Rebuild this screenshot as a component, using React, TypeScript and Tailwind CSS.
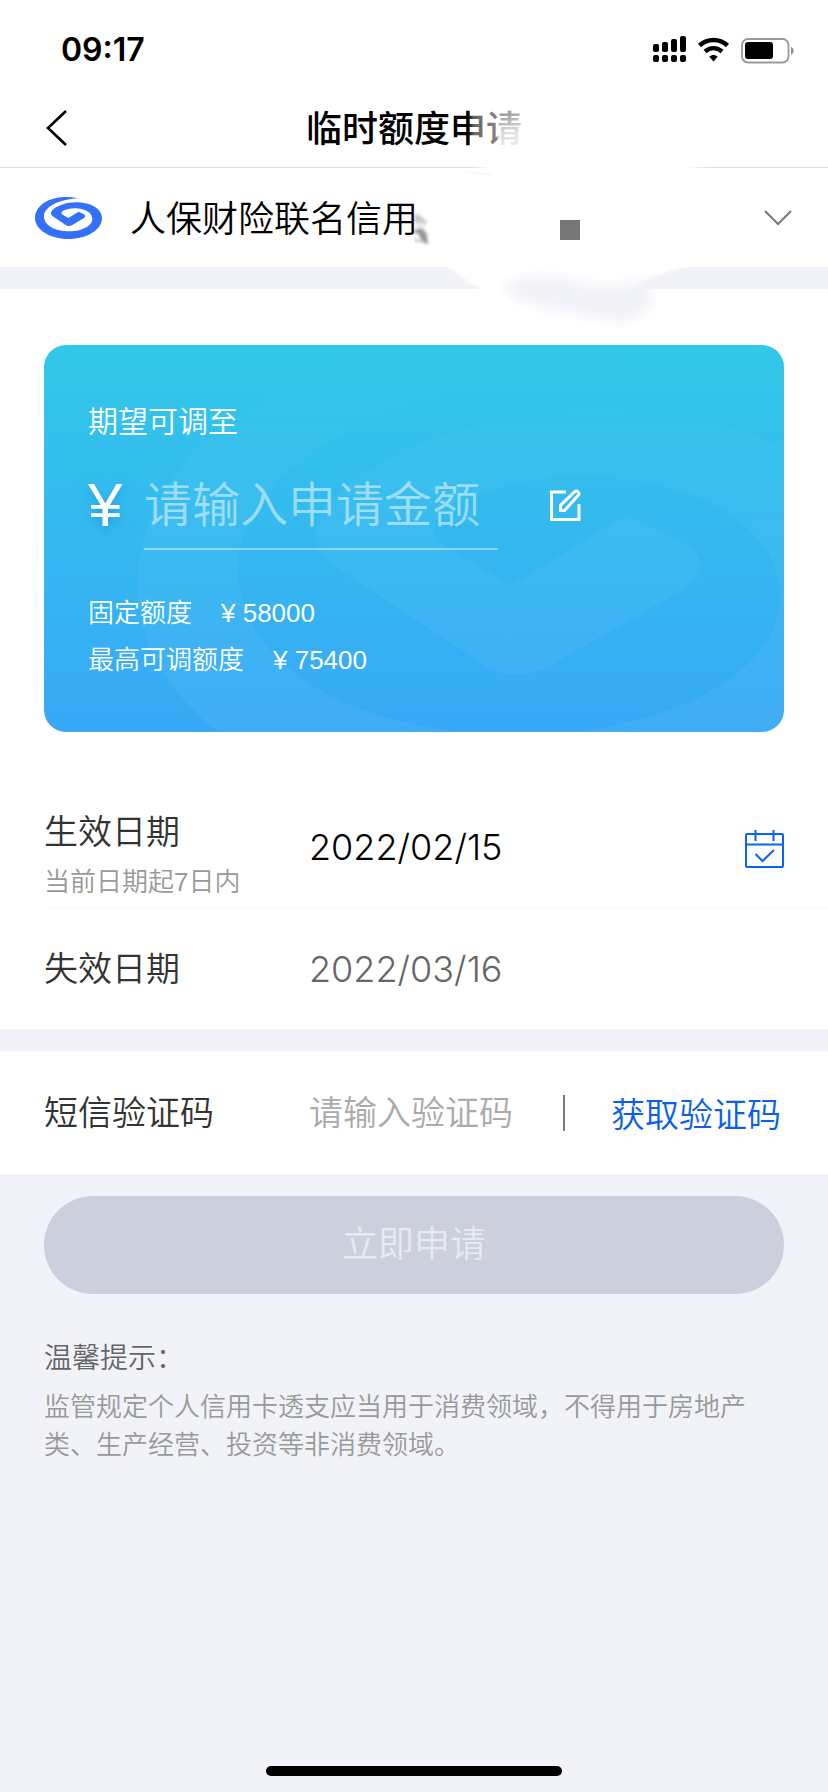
import { useState } from "react";

const SWIRL =
    "M131 4 C117 1 100 0 87 0 C38 2 0 28 0 63 C0 98 45 126 100 126 C156 126 201 98 201 63 C201 36 168 16 122 16 C95 16 66 26 52 40 C46 46 46 53 53 58 L91 83 C97 88 106 88 113 83 L146 64 C152 60 152 56 147 52 L131 44 L100 63 L83 53 C77 49 79 43 87 40 C99 35 113 33 125 34 C155 36 172 50 172 66 C172 87 140 103 103 103 C60 103 27 86 27 58 C27 30 70 7 131 4 Z";

const StatusBar = () => {
    return (
        <div className="flex h-[88px] items-center justify-between pt-3 pl-[61px] pr-[34px]">
            <span className="font-['Inter'] text-[32px] font-semibold leading-10">09:17</span>
            <svg width="142" height="28" viewBox="0 0 142 28" aria-hidden="true">
                <rect x="1" y="8" width="6" height="8" rx="2" />
                <rect x="10" y="6" width="6" height="10" rx="2" />
                <rect x="19" y="3" width="6" height="13" rx="2" />
                <rect x="28" y="0" width="6" height="16" rx="2" />
                <rect x="1" y="19" width="6" height="7" rx="2" />
                <rect x="10" y="19" width="6" height="7" rx="2" />
                <rect x="19" y="19" width="6" height="7" rx="2" />
                <rect x="28" y="19" width="6" height="7" rx="2" />
                <path d="M47.5 9.5 C55.5 2.2 67.5 2.2 75.5 9.5" fill="none" stroke="#000" strokeWidth="4.6" />
                <path d="M53 15.5 C58 11 65 11 70 15.5" fill="none" stroke="#000" strokeWidth="4.4" />
                <path d="M57.3 20.8 C59.8 18.5 63.2 18.5 65.7 20.8 L61.5 25.5 Z" />
                <rect x="90" y="3" width="46.5" height="23.5" rx="6" fill="none" stroke="#999" strokeWidth="1.8" />
                <rect x="93" y="6" width="28" height="17" rx="3" />
                <path d="M139 11 C142.5 12 142.5 17.5 139 18.5 Z" fill="#8e8e8e" />
            </svg>
        </div>
    )
}

// brush strokes that hide the end of the card name
const Smear = () => {
    return (
        <svg
            className="pointer-events-none absolute left-1/2 top-0"
            width="414" height="340" viewBox="0 0 1242 1020" aria-hidden="true">
            <defs>
                <linearGradient id="fadeX">
                    <stop offset="0" stopColor="#fff" stopOpacity="0" />
                    <stop offset="0.1" stopColor="#fff" stopOpacity="0.4" />
                    <stop offset="0.6" stopColor="#fff" stopOpacity="0.55" />
                    <stop offset="1" stopColor="#fff" stopOpacity="0.7" />
                </linearGradient>
                <linearGradient id="fadeY" x1="0" y1="0" x2="0" y2="1">
                    <stop offset="0" stopColor="#fff" stopOpacity="0" />
                    <stop offset="0.6" stopColor="#fff" stopOpacity="0.7" />
                    <stop offset="1" stopColor="#fff" stopOpacity="0.8" />
                </linearGradient>
                <linearGradient id="lineFade">
                    <stop offset="0" stopColor="#fff" stopOpacity="0" />
                    <stop offset="0.08" stopColor="#fff" />
                    <stop offset="0.9" stopColor="#fff" />
                    <stop offset="1" stopColor="#fff" stopOpacity="0" />
                </linearGradient>
                <filter id="soft" x="-20%" y="-20%" width="140%" height="140%">
                    <feGaussianBlur stdDeviation="16" />
                </filter>
                <filter id="softer" x="-20%" y="-20%" width="140%" height="140%">
                    <feGaussianBlur stdDeviation="5" />
                </filter>
            </defs>
            <rect x="162" y="320" width="180" height="130" fill="url(#fadeX)" />
            <rect x="250" y="330" width="92" height="115" fill="url(#fadeY)" />
            <rect x="170" y="490" width="720" height="24" fill="url(#lineFade)" />
            <path d="M130 512 L235 520 L235 526 L180 522 Z" fill="#f8f8f8" />
            <path
                d="M75 790 C130 815 160 850 215 876 L650 876 C700 830 760 815 850 790 Z"
                fill="#fff" filter="url(#softer)" />
            <path
                d="M265 862 C330 815 400 830 470 835 C560 880 640 850 730 835 L700 880 C735 905 690 950 620 970 C500 940 380 930 290 890 Z"
                fill="#f2f3f9" filter="url(#soft)" />
            <g filter="url(#softer)">
                <path d="M0 645 L14 642 L38 664 L38 672 L0 668 Z" fill="#ccc" />
                <path d="M0 674 L34 670 L36 690 L0 684 Z" fill="#eee" />
                <path d="M0 690 L22 684 L38 700 L42 734 L24 724 L12 700 L0 700 Z" fill="#999" />
                <path d="M0 714 L26 722 L30 730 L0 724 Z" fill="#ccc" />
            </g>
            <rect x="438" y="660" width="60" height="60" fill="#777" />
        </svg>
    )
}

const Header = () => {
    return (
        <div className="relative bg-white">
            <StatusBar />
            <header className="grid h-20 grid-cols-[1fr_auto_1fr] items-center border-b border-[#dcdcdf] px-11">
                <button type="button" aria-label="返回" className="justify-self-start">
                    <svg width="26" height="38" viewBox="0 0 26 38" fill="none" stroke="#000" strokeWidth="2.6">
                        <path d="M22 2 L4 19 L22 36" />
                    </svg>
                </button>
                <h1 className="pt-1 text-4xl font-medium text-black">临时额度申请</h1>
            </header>
            <button type="button" className="flex h-[99px] w-full items-center pl-[35px] pr-9 text-left">
                <svg className="mr-7" width="67" height="42" viewBox="0 0 201 126" aria-hidden="true">
                    <path d={SWIRL} fill="#3370fb" />
                </svg>
                <span className="grow pt-1 text-4xl text-black">人保财险联名信用</span>
                <svg width="28" height="16" viewBox="0 0 28 16" fill="none" stroke="#777" strokeWidth="2">
                    <path d="M1 1 L14 14 L27 1" />
                </svg>
            </button>
            <div className="h-[22px] bg-[#f2f3f9]" />
            <Smear />
        </div>
    )
}

const AmountCard = () => {
    const [amount, setAmount] = useState("");
    return (
        <section className="relative mx-11 overflow-hidden rounded-[22px] bg-linear-to-b from-[#32c8e8] to-[#37a8f6] px-11 pb-12 pt-[55px] text-white">
            <svg
                className="pointer-events-none absolute left-[93px] top-[5px]"
                width="752" height="471" viewBox="0 0 201 126" aria-hidden="true">
                <defs>
                    <linearGradient id="mark" x1="0" y1="0" x2="0" y2="1">
                        <stop offset="0" stopColor="#fff" stopOpacity="0" />
                        <stop offset="0.4" stopColor="#fff" stopOpacity="0.04" />
                        <stop offset="1" stopColor="#fff" stopOpacity="0.05" />
                    </linearGradient>
                </defs>
                <path d={SWIRL} fill="url(#mark)" />
            </svg>
            <div className="relative">
                <label htmlFor="amount" className="block text-[30px] leading-11">期望可调至</label>
                <div className="mt-[22px] flex items-center">
                    <span className="w-14 pb-[6px] font-['Liberation_Sans'] text-[62px] leading-none [text-shadow:0_4px_8px_#1a7fd080]">¥</span>
                    <input
                        id="amount"
                        value={amount}
                        onChange={(e) => setAmount(e.target.value)}
                        className="h-[84px] w-[354px] border-b-2 border-white/40 bg-transparent pb-1 text-5xl outline-none placeholder:text-white/50"
                        type="text" placeholder="请输入申请金额" />
                    <button type="button" aria-label="编辑" className="ml-[50px] pb-[6px]">
                        <svg width="34" height="34" viewBox="0 0 34 34" fill="none" stroke="#fff" strokeWidth="3">
                            <path d="M18 4 H3.5 V31.5 H31 V16" />
                            <path d="M12.5 22.5 V17.5 L27 3.5 C29 2 32 5 30.5 7 L16.500 22.500 Z" />
                        </svg>
                    </button>
                </div>
                <p className="mt-10 text-[26px] leading-[47px]">
                    固定额度<span className="ml-[29px]">¥ 58000</span>
                </p>
                <p className="text-[26px] leading-[47px]">
                    最高可调额度<span className="ml-[29px]">¥ 75400</span>
                </p>
            </div>
        </section>
    )
}

const DateRows = () => {
    return (
        <section className="mt-[54px]">
            <div className="ml-11 flex h-[123px] items-center border-b border-[#fafafc] pr-11">
                <div className="w-[265px] shrink-0 pt-[22px]">
                    <p className="text-[34px] leading-12 text-[#333]">生效日期</p>
                    <p className="text-[26px] leading-[52px] text-[#999]">当前日期起7日内</p>
                </div>
                <span className="grow font-['Inter'] text-4xl text-black">2022/02/15</span>
                <button type="button" aria-label="选择日期" className="pt-1">
                    <svg width="40" height="40" viewBox="0 0 40 40" fill="none" stroke="#0a63f5" strokeWidth="2">
                        <rect x="2" y="5" width="37" height="33" rx="1" />
                        <path d="M2 15.5 H39 M11.5 1 V12 M29.5 1 V12 M11.5 25 L18.5 32 L30 21" />
                    </svg>
                </button>
            </div>
            <div className="flex h-[120px] items-center px-11">
                <p className="w-[265px] shrink-0 text-[34px] text-[#333]">失效日期</p>
                <span className="font-['Inter'] text-4xl text-[#666]">2022/03/16</span>
            </div>
        </section>
    )
}

const SmsRow = () => {
    const [code, setCode] = useState("");
    return (
        <div className="flex h-[122px] items-center bg-white pl-11 pr-[47px]">
            <label htmlFor="code" className="w-[265px] shrink-0 text-[34px] text-[#333]">短信验证码</label>
            <input
                id="code"
                value={code}
                onChange={(e) => setCode(e.target.value)}
                className="w-0 grow bg-transparent text-[34px] outline-none placeholder:text-[#aaa]"
                type="text" placeholder="请输入验证码" />
            <span className="h-9 w-[2px] bg-[#777]" />
            <button type="button" className="ml-[46px] pt-1 text-[34px] text-[#0a60e8]">获取验证码</button>
        </div>
    )
}

const App = () => {
    return (
        <div className="flex min-h-screen flex-col bg-[#f2f3f9] font-['Liberation_Sans','Noto_Sans_CJK_SC',sans-serif] font-[350]">
            <Header />
            <main className="grow">
                <div className="mb-[23px] bg-white pt-14">
                    <AmountCard />
                    <DateRows />
                </div>
                <SmsRow />
                <div className="px-11 pt-[22px]">
                    <button type="button" disabled className="h-[98px] w-full rounded-full bg-[#cbd0dc] text-4xl text-[#e6eaf3]">
                        立即申请
                    </button>
                    <h2 className="mt-[43px] text-[28px] leading-11 text-[#666]">温馨提示：</h2>
                    <p className="mt-[7px] text-[26px] leading-[38px] text-[#999]">
                        监管规定个人信用卡透支应当用于消费领域，不得用于房地产类、生产经营、投资等非消费领域。
                    </p>
                </div>
            </main>
            <div className="mx-auto mb-4 h-[10px] w-[296px] rounded-full bg-black" />
        </div>
    )
}

export default App
